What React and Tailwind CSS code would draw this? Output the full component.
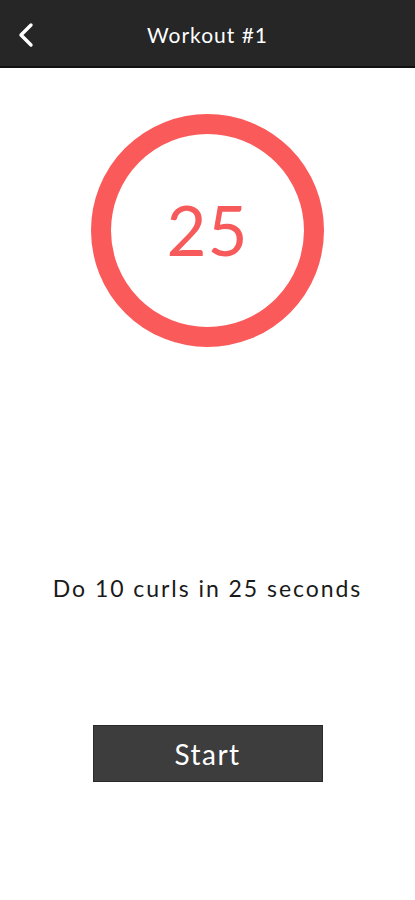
export default function App() {
  return (
    <div className="w-[415px] h-[900px] bg-white flex flex-col" style={{ fontFamily: 'Lato, "Open Sans", sans-serif' }}>
      <header className="h-[68px] bg-[#262626] border-b-2 border-[#111111] flex items-center relative shrink-0">
        <svg className="absolute left-[14px] top-[22px]" width="24" height="26" viewBox="0 0 24 26" fill="none">
          <path d="M17 3 L7 13 L17 23" stroke="white" strokeWidth="3.4" strokeLinecap="round" strokeLinejoin="round" />
        </svg>
        <h1 className="w-full text-center text-white text-[21px] leading-none tracking-[1px] pt-[3px]">Workout #1</h1>
      </header>
      <div className="flex justify-center pt-[46px]">
        <div className="w-[233px] h-[233px] rounded-full border-[20px] border-[#fb5a5a] flex items-center justify-center">
          <span className="text-[#f75a5a] text-[69px] leading-none tracking-[1px] pb-[2px]">25</span>
        </div>
      </div>
      <p className="mt-[230px] text-center text-[#1a1a1a] text-[23px] leading-none tracking-[1.95px]">Do 10 curls in 25 seconds</p>
      <div className="flex justify-center mt-[125px]">
        <button className="w-[230px] h-[57px] bg-[#3d3d3d] border border-[#2a2a2a] text-white text-[28px] leading-none tracking-[1.5px]">Start</button>
      </div>
    </div>
  );
}
